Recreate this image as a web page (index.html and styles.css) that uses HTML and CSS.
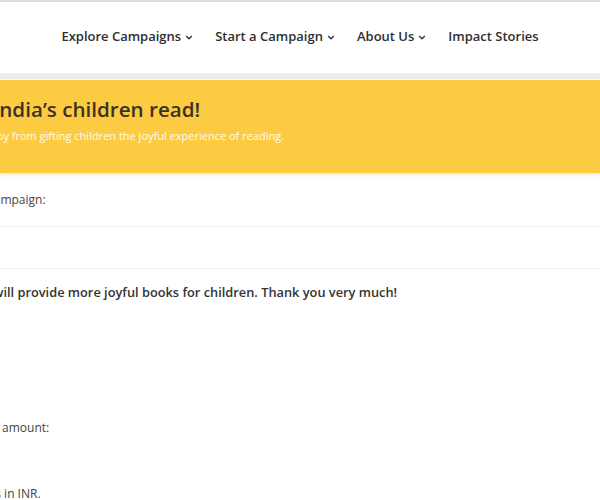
FILE: index.html
```html
<!DOCTYPE html>
<html>
<head>
<meta charset="utf-8">
<link rel="stylesheet" href="styles.css">
</head>
<body>
<header class="header">
  <nav class="nav">
    <a class="nav-item">Explore Campaigns <svg class="chev" viewBox="0 0 10 6"><path d="M1.5 1.2 L5 4.6 L8.5 1.2" fill="none" stroke="currentColor" stroke-width="1.6"/></svg></a>
    <a class="nav-item">Start a Campaign <svg class="chev" viewBox="0 0 10 6"><path d="M1.5 1.2 L5 4.6 L8.5 1.2" fill="none" stroke="currentColor" stroke-width="1.6"/></svg></a>
    <a class="nav-item">About Us <svg class="chev" viewBox="0 0 10 6"><path d="M1.5 1.2 L5 4.6 L8.5 1.2" fill="none" stroke="currentColor" stroke-width="1.6"/></svg></a>
    <a class="nav-item">Impact Stories</a>
  </nav>
</header>
<div class="band"></div>
<section class="hero">
  <h1 class="hero-title">India’s children read!</h1>
  <p class="hero-sub">joy from gifting children the joyful experience of reading.</p>
</section>
<main class="form">
  <div class="row label-row"><span class="label shift-c">campaign:</span></div>
  <div class="row field-row"></div>
  <div class="row note-row"><span class="note shift-w">will provide more joyful books for children. Thank you very much!</span></div>
  <div class="row amount-row"><span class="label shift-r">r amount:</span></div>
  <div class="row inr-row"><span class="label shift-l">ts in INR.</span></div>
</main>
</body>
</html>
```
FILE: styles.css
```css
html, body {
  margin: 0;
  padding: 0;
  background: #ffffff;
  font-family: "Open Sans", "Noto Sans", sans-serif;
  overflow: hidden;
}
.header {
  border-top: 2px solid #dcdcdc;
  height: 71px;
  display: flex;
  align-items: center;
  justify-content: center;
  background: #fff;
}
.nav {
  display: flex;
  gap: 22px;
  margin-left: 0;
  margin-top: -3px;
}
.nav-item {
  font-size: 13px;
  font-weight: 600;
  color: #2e2e2e;
  display: flex;
  align-items: center;
  gap: 4px;
  white-space: nowrap;
}
.chev {
  width: 8px;
  height: 5px;
  margin-top: 2px;
}
.band {
  height: 6px;
  background: linear-gradient(#f0f0f2, #ebebee);
  border-bottom: 1px solid #fafafa;
}
.hero {
  background: #fccb41;
  height: 93px;
  padding: 0;
  overflow: hidden;
  box-shadow: 0 2px 3px rgba(200, 160, 40, 0.25);
}
.hero-title {
  margin: 0;
  padding-top: 15px;
  margin-left: -7px;
  font-size: 20.6px;
  font-weight: 600;
  color: #3a3325;
  line-height: 28px;
  white-space: nowrap;
}
.hero-sub {
  margin: 5px 0 0 -6px;
  font-size: 11px;
  color: #fffbea;
  line-height: 16px;
  white-space: nowrap;
}
.form {
  display: flex;
  flex-direction: column;
}
.row {
  display: flex;
  align-items: center;
  white-space: nowrap;
}
.label-row {
  height: 53px;
  border-bottom: 1px solid #f1f1f1;
}
.field-row {
  height: 41px;
  border-bottom: 1px solid #f1f1f1;
}
.note-row {
  height: 46px;
}
.amount-row {
  margin-top: 90px;
  height: 44px;
}
.inr-row {
  margin-top: 32px;
  height: 24px;
}
.label {
  font-size: 12px;
  color: #444;
}
.note {
  font-size: 12.8px;
  font-weight: 600;
  color: #333;
}
.shift-c { margin-left: -12px; }
.shift-w { margin-left: -7px; }
.shift-r { margin-left: -6px; }
.shift-l { margin-left: -9px; }
```
